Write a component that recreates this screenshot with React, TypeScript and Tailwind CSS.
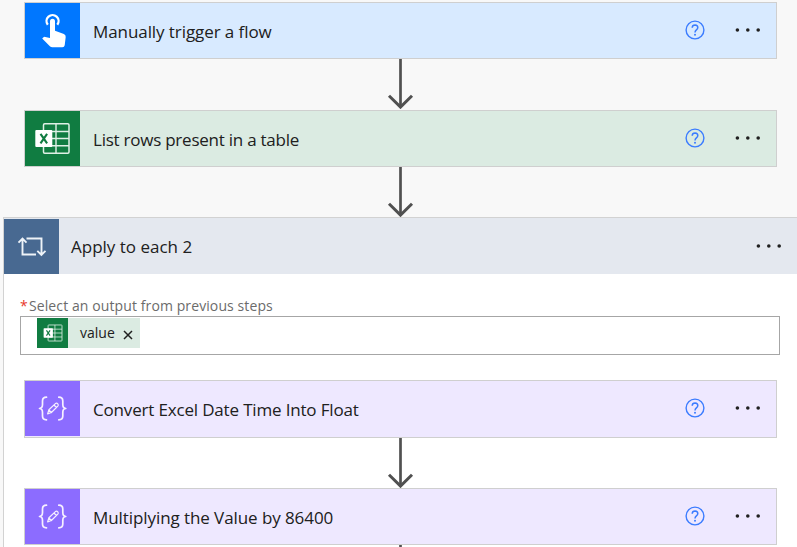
import type { ReactNode } from "react";

function TapIcon() {
  return (
    <svg width="55" height="55" viewBox="0 0 55 55" fill="none">
      <path d="M22.800 22.600a6 6 0 1 1 9.500 0" stroke="#fff" strokeWidth="2.300" transform="translate(0 -.8)" />
      <path
        d="M25 18.200a2.500 2.500 0 0 1 5 0v9.500l8.900 3.400q2 .8 1.800 2.900l-1 8.300q-.3 2-2.300 2h-10q-1.500 0-2.500-1l-7.700-7.800 1.300-1.300q.8-.7 1.800-.3l4.700 1.200z"
        fill="#fff"
      />
    </svg>
  );
}

function ExcelIcon({ size = 55 }: { size?: number }) {
  return (
    <svg width={size} height={size} viewBox="0 0 55 55" fill="none">
      <rect x="18.500" y="12.800" width="25.500" height="29.400" rx="1.200" stroke="#dff0e6" strokeWidth="1.500" />
      <path d="M18.500 20.500H44M18.500 27.500H44M18.500 34.800H44M31 12.800v29.400" stroke="#dff0e6" strokeWidth="1.400" />
      <rect x="10.300" y="19" width="17" height="17" rx="1" fill="#fff" />
      <path d="M15.500 22.800l6.600 9.600M22.100 22.800l-6.600 9.600" stroke="#107c41" strokeWidth="2.100" />
    </svg>
  );
}

function BracesIcon() {
  return (
    <svg width="55" height="55" viewBox="0 0 55 55" fill="none" stroke="#f6f0ff" strokeLinecap="round" strokeLinejoin="round">
      <path
        d="M21.500 16.200c-3 0-4 1.300-4 3.800v3.600c0 2.300-.8 3.700-3 3.900 2.200.2 3 1.600 3 3.900v3.600c0 2.500 1 3.800 4 3.800M33.800 16.200c3 0 4 1.300 4 3.800v3.600c0 2.300.8 3.700 3 3.900-2.200.2-3 1.600-3 3.900v3.600c0 2.500-1 3.800-4 3.800"
        strokeWidth="1.700"
      />
      <path d="M22.600 32.900l1.300-4.100 6.500-6.200q1.300-.9 2.400.2 1 1.200 0 2.300l-6.400 6.400zM23.900 28.800l2.500 2.700M29 24l2.400 2.500" strokeWidth="1.200" />
    </svg>
  );
}

function LoopIcon() {
  return (
    <svg width="55" height="55" viewBox="0 0 55 55" fill="none" stroke="#eef3f8" strokeWidth="1.900">
      <path d="M32 35.500H18.500V20M14.500 23.600l4-4 4 4M22.500 19.500H37.500v16M33.300 31.900l4.100 4 4.100-4" />
    </svg>
  );
}

function HelpIcon() {
  return (
    <svg width="20" height="20" viewBox="0 0 20 20" fill="none" stroke="#3b7cff">
      <circle cx="10" cy="10" r="8.900" strokeWidth="1.400" />
      <path d="M7.200 7.700q.1-2.700 2.900-2.700 2.700.1 2.700 2.500 0 1.300-1.400 2.400Q10 11 10 12.500" strokeWidth="1.500" />
      <circle cx="10" cy="14.700" r="1" fill="#3b7cff" stroke="none" />
    </svg>
  );
}

function Dots() {
  return (
    <svg width="26" height="4" viewBox="0 0 26 4" fill="#202020">
      <circle cx="2.400" cy="2" r="1.800" />
      <circle cx="12.800" cy="2" r="1.800" />
      <circle cx="23.200" cy="2" r="1.800" />
    </svg>
  );
}

function Arrow() {
  return (
    <svg className="ml-[387px] block shrink-0" width="27" height="50" viewBox="0 0 27 50" fill="none" stroke="#505050">
      <path d="M13.500 0v47" strokeWidth="2.700" />
      <path d="M2 36.800l11.500 11.300L25 36.800" strokeWidth="3" />
    </svg>
  );
}

type CardProps = { title: string; icon: ReactNode; iconColor: string; color: string; textStyle: string; height: string };

function Card({ title, icon, iconColor, color, textStyle, height }: CardProps) {
  return (
    <div className={`ml-6 flex w-[753px] shrink-0 items-start border border-[#cfcfcf] ${height} ${color}`}>
      <div className={`h-[55px] w-[55px] shrink-0 ${iconColor}`}>{icon}</div>
      <span className={`ml-[13px] mt-[17px] whitespace-nowrap text-[17px] leading-6 ${textStyle}`}>{title}</span>
      <div className="ml-auto mr-[15px] mt-[17px] flex h-5 items-center gap-[30.5px]">
        <HelpIcon />
        <Dots />
      </div>
    </div>
  );
}

export default function App() {
  return (
    <div className="flex h-[547px] w-[797px] flex-col overflow-hidden bg-[#f8f8f8] pt-[2px] font-['Open_Sans','Noto_Sans',sans-serif] text-[#202020]">
      <Card title="Manually trigger a flow" icon={<TapIcon />} iconColor="bg-[#0077ff]" color="bg-[#d8eaff]" textStyle="tracking-[-0.08px]" height="h-[57px]" />
      <div className="h-[51px]"><Arrow /></div>
      <Card title="List rows present in a table" icon={<ExcelIcon />} iconColor="bg-[#107c41]" color="bg-[#dbebe2]" textStyle="tracking-[-0.24px]" height="h-[57px]" />
      <Arrow />

      <section className="ml-[3px] flex h-[330px] w-[794px] shrink-0 flex-col border-l border-t border-[#d2d2d2] bg-white">
        <header className="flex h-14 shrink-0 items-start bg-[#e4e8ef] pt-px">
          <div className="h-[55px] w-[55px] bg-[#486991]"><LoopIcon /></div>
          <span className="ml-3 mt-4 whitespace-nowrap text-[17px] leading-6">Apply to each 2</span>
          <div className="ml-auto mr-[15px] mt-[25px]"><Dots /></div>
        </header>
        <div className="ml-4 mt-[22px] flex h-5 shrink-0 items-center text-sm leading-5">
          <span className="w-[9px] text-[#e8392b]">*</span>
          <span className="whitespace-nowrap tracking-[0.1px] text-[#6b6b6b]">Select an output from previous steps</span>
        </div>
        <div className="ml-4 h-[39px] w-[760px] shrink-0 border border-[#a6a6a6] pl-4 pt-px">
          <div className="flex h-[30px] w-[103px] items-center bg-[#dbebe2]">
            <div className="flex h-[30px] w-[31px] items-center justify-center bg-[#107c41]"><ExcelIcon size={30} /></div>
            <span className="ml-3 w-[43px] text-sm">value</span>
            <svg width="10" height="10" viewBox="0 0 10 10" className="mt-1" stroke="#202020" strokeWidth="1.500">
              <path d="M1 1l8 8M9 1L1 9" />
            </svg>
          </div>
        </div>
        <div className="-ml-1 mt-[25px] flex flex-col">
          <Card title="Convert Excel Date Time Into Float" icon={<BracesIcon />} iconColor="bg-[#8c6cff]" color="bg-[#eee8ff]" textStyle="tracking-[-0.17px]" height="h-[58px]" />
          <Arrow />
          <Card title="Multiplying the Value by 86400" icon={<BracesIcon />} iconColor="bg-[#8c6cff]" color="bg-[#eee8ff]" textStyle="tracking-[-0.08px]" height="h-[57px]" />
          <Arrow />
        </div>
      </section>
    </div>
  );
}
